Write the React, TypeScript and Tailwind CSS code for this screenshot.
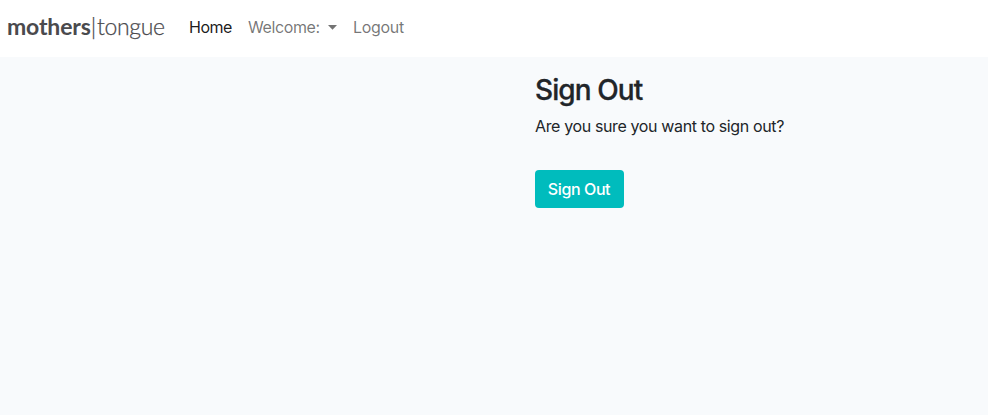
export default function App() {
  return (
    <div className="h-[415px] w-full overflow-hidden bg-[#f8fafc] font-['Inter',sans-serif] text-base text-[#212529]">
      <nav className="flex h-[57px] items-start bg-white pl-[7px] leading-6">
        <a className="mt-[9px] w-[158px] whitespace-nowrap font-['Lato',sans-serif] text-[23px] leading-[34px] text-[#4a4a4d]">
          <span className="font-bold tracking-[-0.15px]">mothers</span>
          <span className="font-light tracking-[0.8px] [-webkit-text-stroke:0.25px_#4a4a4d]">|</span>
          <span className="font-light tracking-[-0.35px] [-webkit-text-stroke:0.25px_#4a4a4d]">tongue</span>
        </a>
        <div className="mt-[15px] ml-6 flex gap-4">
          <a className="w-[43px] whitespace-nowrap tracking-[-0.5px] text-black/90">Home</a>
          <a className="flex w-[89px] items-center whitespace-nowrap tracking-[-0.4px] text-black/55">
            Welcome:
            <svg className="ml-auto h-[5px] w-[9px]" viewBox="0 0 9 5" fill="currentColor">
              <path d="M0 0h9L4.5 4.8z" />
            </svg>
          </a>
          <a className="whitespace-nowrap tracking-[-0.32px] text-black/55">Logout</a>
        </div>
      </nav>
      <main className="flex flex-col items-start pt-4 pl-[535px]">
        <h1 className="text-[28px] leading-[34px] font-medium tracking-[-0.9px] [-webkit-text-stroke:0.3px_#212529]">Sign Out</h1>
        <p className="mt-[7px] leading-6 tracking-[-0.37px]">Are you sure you want to sign out?</p>
        <button className="mt-8 h-[38px] w-[89px] rounded bg-[#00bcbd] pr-px font-medium tracking-[-0.4px] text-white">Sign Out</button>
      </main>
    </div>
  );
}
